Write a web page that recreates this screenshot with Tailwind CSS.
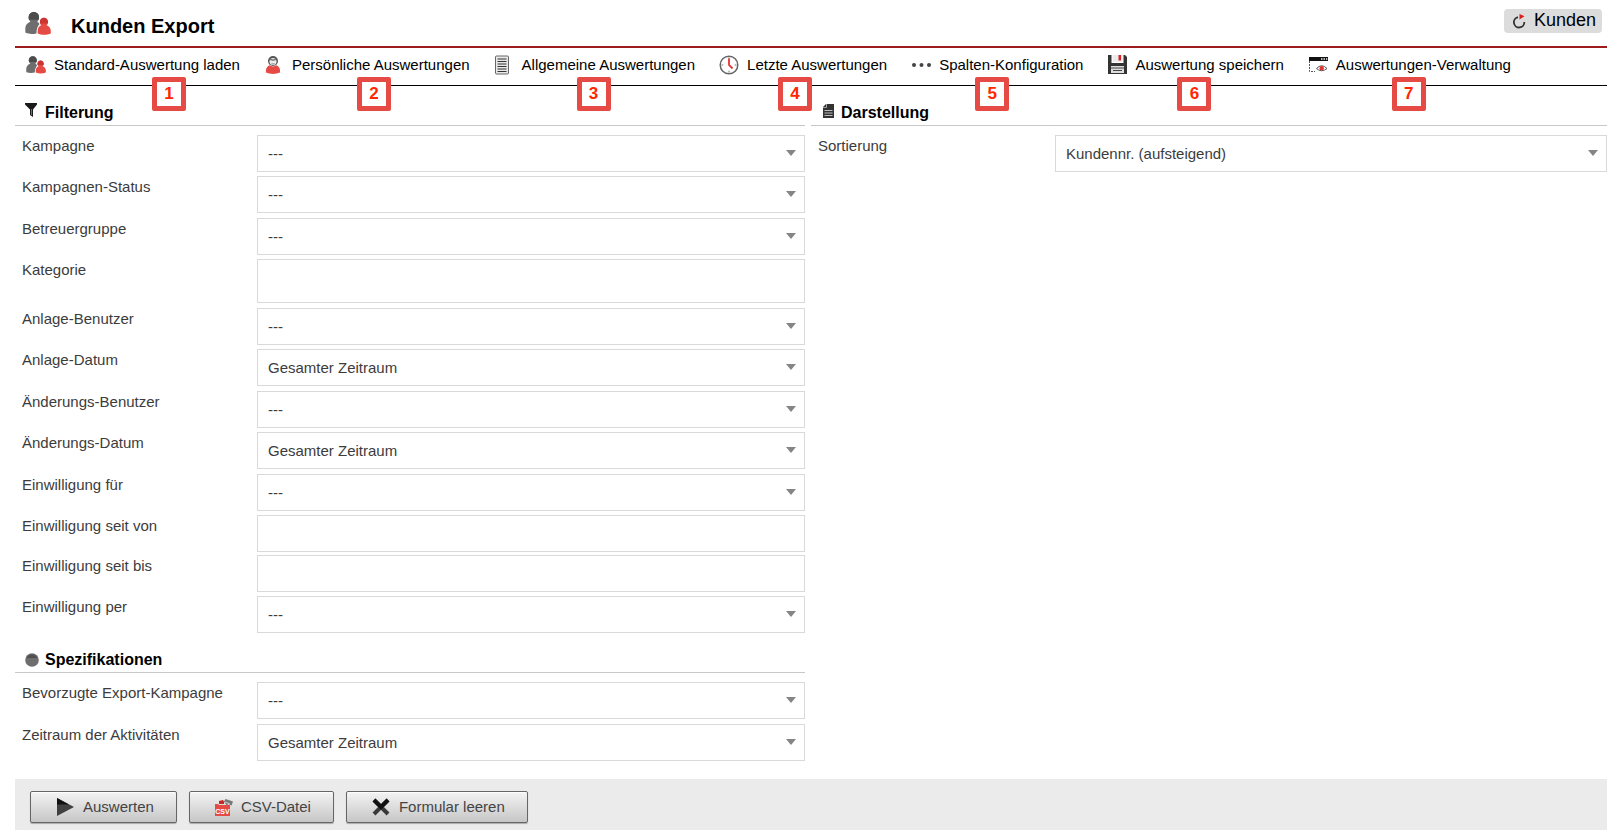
<!DOCTYPE html>
<html lang="de">
<head>
  <meta charset="UTF-8">
  <meta name="viewport" content="width=device-width, initial-scale=1.0">
  <title>Kunden Export</title>
  <script src="https://cdn.jsdelivr.net/npm/@tailwindcss/browser@4"></script>
</head>
<body class="bg-white min-h-screen flex flex-col pl-[15px] font-['Liberation_Sans',Arial,sans-serif] text-[15px] leading-5 text-[#3c3c3c]">

  <!-- Symbole -->
  <svg class="hidden">
    <symbol id="icon-kunden" viewBox="0 0 25 22">
      <path d="M8.500 0c3 0 5 2.200 5 5.200 0 1.800-.7 3.200-1.800 4.200 1 .5 1.800 1.200 2.300 2.100-1.500 1.500-3 4.500-3 9-4 .8-7.500.6-10.500-.5C-.3 14 1 10.800 5.300 9.400 4.200 8.400 3.500 7 3.500 5.200c0-3 2-5.200 5-5.200z" fill="#6e6e6e"/>
      <path d="M8.500 0c3 0 5 2.200 5 5.200 0 .8-.1 1.500-.4 2.100H3.900c-.3-.6-.4-1.300-.4-2.100 0-3 2-5.200 5-5.200z" fill="#4c4c4c"/>
      <path d="M18.200 5.500c2.300 0 3.900 1.700 3.900 4 0 1.400-.5 2.500-1.300 3.200 3 .9 4.400 3.500 4 7.800-3.600 1.700-9 1.700-12.600 0-.4-4.300.8-6.900 3.500-7.800-.9-.7-1.400-1.800-1.400-3.200 0-2.300 1.600-4 3.900-4z" fill="#e54b44"/>
      <path d="M18.200 5.500c2.300 0 3.900 1.700 3.900 4 0 .6-.1 1-.3 1.500h-7.200c-.2-.5-.3-.9-.3-1.500 0-2.300 1.600-4 3.900-4z" fill="#c93530"/>
    </symbol>
    <symbol id="icon-pfeil" viewBox="0 0 10 6">
      <path d="M0 0h10L5 6z" fill="#858585"/>
    </symbol>
  </svg>

  <header class="flex items-start justify-between h-12 border-b-2 border-[#9c1c1c] pl-[10px] pr-[5px]">
    <div class="flex items-start pt-3 gap-5">
      <svg class="w-[26px] h-[23px]"><use href="#icon-kunden"/></svg>
      <h1 class="text-xl leading-7 font-bold text-black">Kunden Export</h1>
    </div>
    <a href="#" class="mt-[9px] h-6 flex items-center gap-2 rounded bg-[#dcdcdc] pl-2 pr-[6px] text-lg leading-6 text-black">
      <svg class="w-[14px] h-[15px]" viewBox="0 0 14 15">
        <path d="M6 3.200A5.200 5.200 0 1 0 12.300 8" fill="none" stroke="#333" stroke-width="1.800"/>
        <path d="M7.500 0l5 2.300-5 3.200z" fill="#d8201c"/>
      </svg>
      <span class="pb-0.5">Kunden</span>
    </a>
  </header>

  <nav class="flex items-start gap-6 h-[38px] border-b border-black pt-1 pl-[11px] text-black whitespace-nowrap">
    <a href="#" class="relative flex items-center gap-2 py-[3px]">
      <svg class="w-5 h-[18px]"><use href="#icon-kunden"/></svg>
      Standard-Auswertung laden
      <span class="absolute left-[126px] top-[25px] size-[34px] flex items-center justify-center border-5 border-[#e54b44] rounded-xs bg-white text-[17px] font-bold text-[#ff2600]">1</span>
    </a>
    <a href="#" class="relative flex items-center gap-2 py-[3px]">
      <svg class="w-5 h-[18px]" viewBox="0 0 20 18">
        <circle cx="9" cy="5" r="5" fill="#555"/>
        <circle cx="9" cy="5.500" r="3.500" fill="#ececec"/>
        <path d="M5 4.500Q6.500 1.500 9 3.500 11.500 1.500 13 4.500 11 4 9 5 7 4 5 4.500z" fill="#777"/>
        <path d="M7.500 7.500Q9 8.500 10.500 7.500" fill="none" stroke="#777" stroke-width=".8"/>
        <path d="M5.500 9.300q3.500 2.200 7 0c2.700 1 3.900 3.600 3.500 7.200-4 1.900-10 1.900-14 0-.4-3.600.8-6.200 3.500-7.200z" fill="#e54b44"/>
      </svg>
      Persönliche Auswertungen
      <span class="absolute left-[93px] top-[25px] size-[34px] flex items-center justify-center border-5 border-[#e54b44] rounded-xs bg-white text-[17px] font-bold text-[#ff2600]">2</span>
    </a>
    <a href="#" class="relative flex items-center gap-2 py-[3px]">
      <svg class="w-5 h-5" viewBox="0 0 20 20">
        <rect x="1.500" y="1" width="13" height="18" rx="1" fill="#e8e8e8" stroke="#666"/>
        <path d="M3.500 4h9M3.500 6.500h9M3.500 9h9M3.500 11.500h9M3.500 14h9M3.500 16.500h9" stroke="#333" stroke-width="1.200"/>
      </svg>
      Allgemeine Auswertungen
      <span class="absolute left-[83px] top-[25px] size-[34px] flex items-center justify-center border-5 border-[#e54b44] rounded-xs bg-white text-[17px] font-bold text-[#ff2600]">3</span>
    </a>
    <a href="#" class="relative flex items-center gap-2 py-[3px]">
      <svg class="w-5 h-5" viewBox="0 0 20 20">
        <circle cx="10" cy="10" r="8.800" fill="#fff" stroke="#666" stroke-width="1.500"/>
        <path d="M10 2.500v1.800M10 15.700v1.800M2.500 10h1.800M15.700 10h1.800" stroke="#777"/>
        <path d="M10 3.500V10l3.500 3.500" fill="none" stroke="#e5352e" stroke-width="1.800"/>
      </svg>
      Letzte Auswertungen
      <span class="absolute left-[59px] top-[25px] size-[34px] flex items-center justify-center border-5 border-[#e54b44] rounded-xs bg-white text-[17px] font-bold text-[#ff2600]">4</span>
    </a>
    <a href="#" class="relative flex items-center gap-2 py-[3px]">
      <svg class="w-5 h-5" viewBox="0 0 20 20" fill="#444">
        <circle cx="3" cy="10" r="2"/>
        <circle cx="10.500" cy="10" r="2"/>
        <circle cx="18" cy="10" r="2"/>
      </svg>
      Spalten-Konfiguration
      <span class="absolute left-[64px] top-[25px] size-[34px] flex items-center justify-center border-5 border-[#e54b44] rounded-xs bg-white text-[17px] font-bold text-[#ff2600]">5</span>
    </a>
    <a href="#" class="relative flex items-center gap-2 py-[3px]">
      <svg class="w-5 h-5" viewBox="0 0 20 20">
        <path d="M1 0h3.500v8h12V0H18l2 2v17H1z" fill="#333"/>
        <path d="M5.500 0h10v7h-10z" fill="#ececec"/>
        <path d="M11.500 0H14v5.500h-2.500z" fill="#e02020"/>
        <path d="M4 11h13v7H4z" fill="#ddd"/>
        <path d="M4 13h13M6 15.500h9" stroke="#444" stroke-width="1.200"/>
      </svg>
      Auswertung speichern
      <span class="absolute left-[70px] top-[25px] size-[34px] flex items-center justify-center border-5 border-[#e54b44] rounded-xs bg-white text-[17px] font-bold text-[#ff2600]">6</span>
    </a>
    <a href="#" class="relative flex items-center gap-2 py-[3px]">
      <svg class="w-5 h-5" viewBox="0 0 20 20">
        <path d="M1.500 3v13.500H7" fill="none" stroke="#555" stroke-dasharray="2 1"/>
        <path d="M1 2h19v4H1z" fill="#111"/>
        <path d="M13 3.200h1.500v1.500H13zM15.500 3.200H17v1.500h-1.500zM18 3.200h1.300v1.500H18z" fill="#eee"/>
        <path d="M8.500 13.500q5-5.500 10.500 0-5.500 4.500-10.500 0z" fill="#fff" stroke="#555"/>
        <circle cx="13.700" cy="13.200" r="2.200" fill="#e0352e"/>
      </svg>
      Auswertungen-Verwaltung
      <span class="absolute left-[84px] top-[25px] size-[34px] flex items-center justify-center border-5 border-[#e54b44] rounded-xs bg-white text-[17px] font-bold text-[#ff2600]">7</span>
    </a>
  </nav>

  <form class="grow flex flex-col">
    <div class="grid grid-cols-[790fr_796fr] gap-x-[6px] pb-[18px]">
      <div>
        <!-- Filterung -->
        <section>
          <h2 class="flex items-center gap-2 h-10 pt-[14px] pl-[10px] border-b border-[#c8c8c8] text-base font-bold text-black">
            <svg class="w-3 h-[15px] mb-1" viewBox="0 0 12 15">
              <path d="M0 0h12v1.500L8 6.500V14l-3-2V6.500L0 1.500z" fill="#1a1a1a"/>
              <path d="M6.500 6v6" stroke="#999" stroke-width=".7"/>
            </svg>
            Filterung
          </h2>
          <div class="pt-[9px]">
            <div class="grid grid-cols-[242fr_548fr] pb-1">
              <label for="kampagne" class="pl-[7px] pt-px">Kampagne</label>
              <div class="relative">
                <select id="kampagne" class="block w-full h-[37px] appearance-none border border-[#d9d9d9] bg-white pl-[10px]"><option>---</option></select>
                <svg class="absolute right-[9px] top-[15px] w-[10px] h-[6px] pointer-events-none"><use href="#icon-pfeil"/></svg>
              </div>
            </div>
            <div class="grid grid-cols-[242fr_548fr] pb-[5px]">
              <label for="kampagnen-status" class="pl-[7px] pt-px">Kampagnen-Status</label>
              <div class="relative">
                <select id="kampagnen-status" class="block w-full h-[37px] appearance-none border border-[#d9d9d9] bg-white pl-[10px]"><option>---</option></select>
                <svg class="absolute right-[9px] top-[15px] w-[10px] h-[6px] pointer-events-none"><use href="#icon-pfeil"/></svg>
              </div>
            </div>
            <div class="grid grid-cols-[242fr_548fr] pb-1">
              <label for="betreuergruppe" class="pl-[7px] pt-px">Betreuergruppe</label>
              <div class="relative">
                <select id="betreuergruppe" class="block w-full h-[37px] appearance-none border border-[#d9d9d9] bg-white pl-[10px]"><option>---</option></select>
                <svg class="absolute right-[9px] top-[15px] w-[10px] h-[6px] pointer-events-none"><use href="#icon-pfeil"/></svg>
              </div>
            </div>
            <div class="grid grid-cols-[242fr_548fr] pb-[5px]">
              <label for="kategorie" class="pl-[7px] pt-px">Kategorie</label>
              <input id="kategorie" type="text" class="block w-full h-11 border border-[#d9d9d9] bg-white px-[10px]">
            </div>
            <div class="grid grid-cols-[242fr_548fr] pb-1">
              <label for="anlage-benutzer" class="pl-[7px] pt-px">Anlage-Benutzer</label>
              <div class="relative">
                <select id="anlage-benutzer" class="block w-full h-[37px] appearance-none border border-[#d9d9d9] bg-white pl-[10px]"><option>---</option></select>
                <svg class="absolute right-[9px] top-[15px] w-[10px] h-[6px] pointer-events-none"><use href="#icon-pfeil"/></svg>
              </div>
            </div>
            <div class="grid grid-cols-[242fr_548fr] pb-[5px]">
              <label for="anlage-datum" class="pl-[7px] pt-px">Anlage-Datum</label>
              <div class="relative">
                <select id="anlage-datum" class="block w-full h-[37px] appearance-none border border-[#d9d9d9] bg-white pl-[10px]"><option>Gesamter Zeitraum</option></select>
                <svg class="absolute right-[9px] top-[15px] w-[10px] h-[6px] pointer-events-none"><use href="#icon-pfeil"/></svg>
              </div>
            </div>
            <div class="grid grid-cols-[242fr_548fr] pb-1">
              <label for="aenderungs-benutzer" class="pl-[7px] pt-px">Änderungs-Benutzer</label>
              <div class="relative">
                <select id="aenderungs-benutzer" class="block w-full h-[37px] appearance-none border border-[#d9d9d9] bg-white pl-[10px]"><option>---</option></select>
                <svg class="absolute right-[9px] top-[15px] w-[10px] h-[6px] pointer-events-none"><use href="#icon-pfeil"/></svg>
              </div>
            </div>
            <div class="grid grid-cols-[242fr_548fr] pb-[5px]">
              <label for="aenderungs-datum" class="pl-[7px] pt-px">Änderungs-Datum</label>
              <div class="relative">
                <select id="aenderungs-datum" class="block w-full h-[37px] appearance-none border border-[#d9d9d9] bg-white pl-[10px]"><option>Gesamter Zeitraum</option></select>
                <svg class="absolute right-[9px] top-[15px] w-[10px] h-[6px] pointer-events-none"><use href="#icon-pfeil"/></svg>
              </div>
            </div>
            <div class="grid grid-cols-[242fr_548fr] pb-1">
              <label for="einwilligung-fuer" class="pl-[7px] pt-px">Einwilligung für</label>
              <div class="relative">
                <select id="einwilligung-fuer" class="block w-full h-[37px] appearance-none border border-[#d9d9d9] bg-white pl-[10px]"><option>---</option></select>
                <svg class="absolute right-[9px] top-[15px] w-[10px] h-[6px] pointer-events-none"><use href="#icon-pfeil"/></svg>
              </div>
            </div>
            <div class="grid grid-cols-[242fr_548fr] pb-[3px]">
              <label for="einwilligung-von" class="pl-[7px] pt-px">Einwilligung seit von</label>
              <input id="einwilligung-von" type="text" class="block w-full h-[37px] border border-[#d9d9d9] bg-white px-[10px]">
            </div>
            <div class="grid grid-cols-[242fr_548fr] pb-1">
              <label for="einwilligung-bis" class="pl-[7px] pt-px">Einwilligung seit bis</label>
              <input id="einwilligung-bis" type="text" class="block w-full h-[37px] border border-[#d9d9d9] bg-white px-[10px]">
            </div>
            <div class="grid grid-cols-[242fr_548fr]">
              <label for="einwilligung-per" class="pl-[7px] pt-px">Einwilligung per</label>
              <div class="relative">
                <select id="einwilligung-per" class="block w-full h-[37px] appearance-none border border-[#d9d9d9] bg-white pl-[10px]"><option>---</option></select>
                <svg class="absolute right-[9px] top-[15px] w-[10px] h-[6px] pointer-events-none"><use href="#icon-pfeil"/></svg>
              </div>
            </div>
          </div>
        </section>

        <!-- Spezifikationen -->
        <section>
          <h2 class="flex items-center gap-[6px] h-10 pt-[14px] pl-[10px] border-b border-[#c8c8c8] text-base font-bold text-black">
            <svg class="w-[14px] h-[14px]" viewBox="0 0 14 14">
              <circle cx="7" cy="7" r="6.800" fill="#6e6e6e"/>
              <path d="M1.500 5a6 6 0 0 1 11 0z" fill="#505050"/>
            </svg>
            Spezifikationen
          </h2>
          <div class="pt-[9px]">
            <div class="grid grid-cols-[242fr_548fr] pb-[5px]">
              <label for="export-kampagne" class="pl-[7px] pt-px">Bevorzugte Export-Kampagne</label>
              <div class="relative">
                <select id="export-kampagne" class="block w-full h-[37px] appearance-none border border-[#d9d9d9] bg-white pl-[10px]"><option>---</option></select>
                <svg class="absolute right-[9px] top-[15px] w-[10px] h-[6px] pointer-events-none"><use href="#icon-pfeil"/></svg>
              </div>
            </div>
            <div class="grid grid-cols-[242fr_548fr]">
              <label for="zeitraum" class="pl-[7px] pt-px">Zeitraum der Aktivitäten</label>
              <div class="relative">
                <select id="zeitraum" class="block w-full h-[37px] appearance-none border border-[#d9d9d9] bg-white pl-[10px]"><option>Gesamter Zeitraum</option></select>
                <svg class="absolute right-[9px] top-[15px] w-[10px] h-[6px] pointer-events-none"><use href="#icon-pfeil"/></svg>
              </div>
            </div>
          </div>
        </section>
      </div>

      <!-- Darstellung -->
      <section>
        <h2 class="flex items-center gap-[7px] h-10 pt-[14px] pl-3 border-b border-[#c8c8c8] text-base font-bold text-black">
          <svg class="w-[11px] h-[14px] mb-1" viewBox="0 0 11 14">
            <path d="M3 0h8v14H0V3z" fill="#333"/>
            <path d="M0 3.500h3.500V0" fill="none" stroke="#bbb" stroke-width=".8"/>
            <path d="M1.500 6.500h8M1.500 9h8M1.500 11.500h8" stroke="#bbb"/>
          </svg>
          Darstellung
        </h2>
        <div class="pt-[9px]">
          <div class="grid grid-cols-[244fr_552fr]">
            <label for="sortierung" class="pl-[7px] pt-px">Sortierung</label>
            <div class="relative">
              <select id="sortierung" class="block w-full h-[37px] appearance-none border border-[#d9d9d9] bg-white pl-[10px]"><option>Kundennr. (aufsteigend)</option></select>
              <svg class="absolute right-[9px] top-[15px] w-[10px] h-[6px] pointer-events-none"><use href="#icon-pfeil"/></svg>
            </div>
          </div>
        </div>
      </section>
    </div>

    <footer class="grow flex items-start gap-3 bg-[#ebebeb] px-[15px] pt-3 pb-[7px]">
      <button type="submit" class="h-8 flex items-center gap-[9px] rounded-xs border border-[#666] bg-linear-to-b from-[#f4f4f4] to-[#c6c6c6] pl-[25px] pr-[22px] text-[#444] shadow-[0_1px_1px_#aaa,inset_0_1px_0_#fff]">
        <svg class="w-[18px] h-[18px]" viewBox="0 0 18 18">
          <path d="M1 0l17 9-17 9z" fill="#404040"/>
          <path d="M1 0l12 6.500H1z" fill="#111"/>
        </svg>
        Auswerten
      </button>
      <button type="button" class="h-8 flex items-center gap-2 rounded-xs border border-[#666] bg-linear-to-b from-[#f4f4f4] to-[#c6c6c6] pl-[25px] pr-[22px] text-[#444] shadow-[0_1px_1px_#aaa,inset_0_1px_0_#fff]">
        <svg class="w-[18px] h-[18px]" viewBox="0 0 18 18">
          <path d="M4 6V3l4-1 1 1.500V6z" fill="#c72722"/>
          <path d="M9 3.500L10.500 1 18 3.500 16.500 7.500 13 6l-1 2z" fill="#777"/>
          <path d="M10 4l5 2" stroke="#ccc"/>
          <path d="M0 6h3l1 1h11v11H0z" fill="#e54b44"/>
          <text x="7.500" y="16" text-anchor="middle" font-size="7" font-weight="bold" fill="#fff">CSV</text>
        </svg>
        CSV-Datei
      </button>
      <button type="reset" class="h-8 flex items-center gap-[9px] rounded-xs border border-[#666] bg-linear-to-b from-[#f4f4f4] to-[#c6c6c6] pl-[25px] pr-[22px] text-[#444] shadow-[0_1px_1px_#aaa,inset_0_1px_0_#fff]">
        <svg class="w-[18px] h-[18px]" viewBox="0 0 18 18">
          <path d="M2 2l14 14M16 2L2 16" stroke="#3a3a3a" stroke-width="4"/>
          <path d="M2 2l7 7 7-7" fill="none" stroke="#111" stroke-width="4"/>
        </svg>
        Formular leeren
      </button>
    </footer>
  </form>

</body>
</html>
